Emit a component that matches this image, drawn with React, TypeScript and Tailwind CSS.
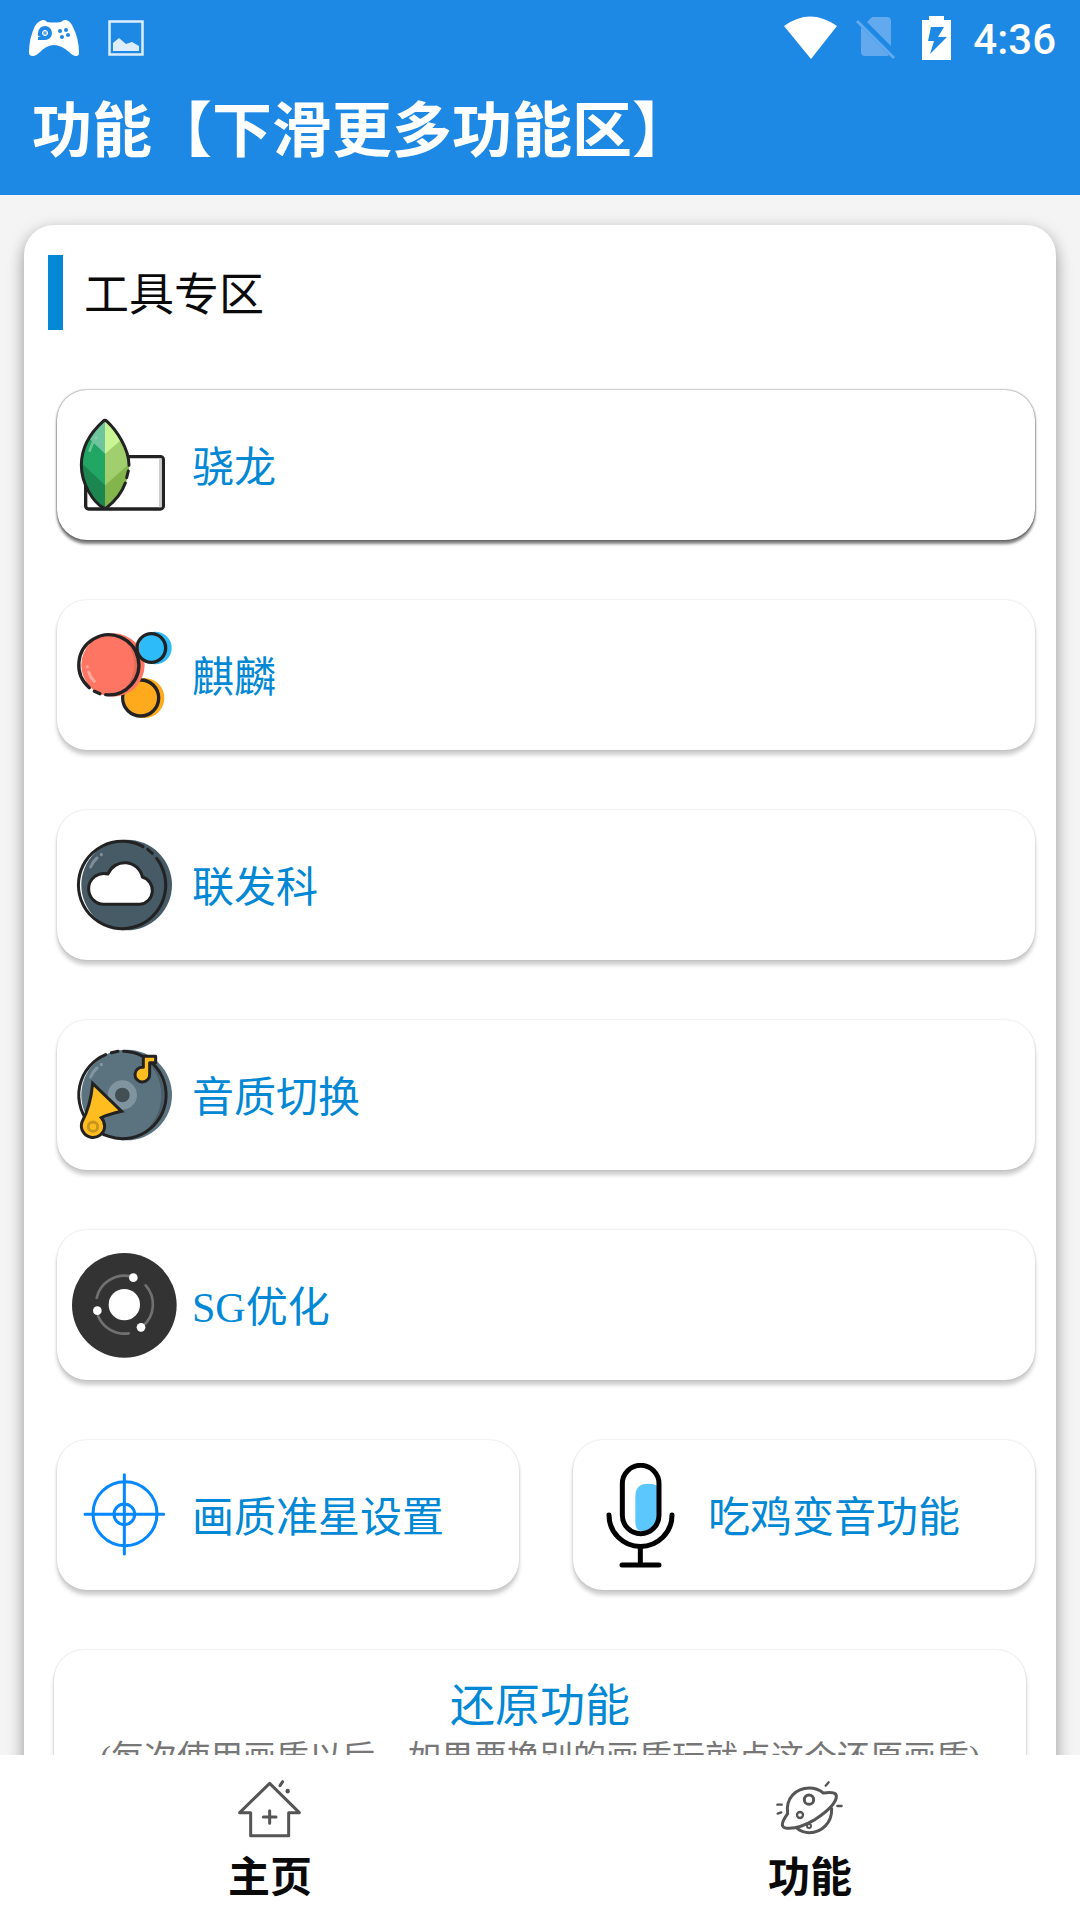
import { useState } from 'react';
import type { ReactNode } from 'react';
import clsx from 'clsx';

const INK = '#222222';

function LeafIcon() {
  return (
    <svg viewBox="216 638 315 315" className="size-[105px] shrink-0" aria-hidden="true">
      <defs>
        <clipPath id="leaf">
          <path d="M315 660C270 697 244 745 244 795C244 850 280 906 315 925C355 897 387 850 387 795C387 745 350 690 315 660Z" />
        </clipPath>
      </defs>
      <rect x="257" y="769" width="233" height="157" rx="9" fill="#fff" stroke={INK} strokeWidth="10" />
      <path d="M481 774V921" stroke="#cfcfcf" strokeWidth="8" />
      <g clipPath="url(#leaf)">
        <path d="M240 650H315V930H240Z" fill="#21a663" />
        <path d="M315 650H395V930H315Z" fill="#a2cf6e" />
        <path d="M240 650H315V760L240 688Z" fill="#6fc59d" />
        <path d="M315 650H395V692L315 760Z" fill="#c9f594" />
        <path d="M240 784L315 855V930H240Z" fill="#1b8650" />
        <path d="M395 784L315 855V930H395Z" fill="#82b54b" />
        <path d="M269 751L278 728M288 712V713" stroke="#9bd8bb" strokeWidth="8" strokeLinecap="round" opacity=".6" />
      </g>
      <path
        d="M387 795C387 745 350 690 321 663Q315 657 309 663C268 700 244 745 244 795C244 850 280 906 309 922Q315 926 321 921C345 902 366 876 376 848M380 832L385 812"
        fill="none"
        stroke={INK}
        strokeWidth="9"
        strokeLinecap="round"
      />
    </svg>
  );
}

function BubblesIcon() {
  return (
    <svg viewBox="96 129 315 315" className="size-[105px] shrink-0" aria-hidden="true" fill="none">
      <circle cx="313" cy="354" r="60" fill="#ffa91c" />
      <path d="M335 308A54 54 0 0 1 330 400A64 64 0 0 0 335 308Z" fill="#e5961b" />
      <circle cx="302" cy="354" r="54" stroke={INK} strokeWidth="10" />
      <circle cx="219" cy="255" r="95" fill="#fe7564" />
      <path d="M258 184A92 92 0 0 1 240 338A106 106 0 0 0 258 184Z" fill="#e5695b" />
      <path
        d="M148 323A90 90 0 1 1 197 344M163 334L180 341"
        stroke={INK}
        strokeWidth="10"
        strokeLinecap="round"
      />
      <path d="M146 276Q151 293 163 304M142 260V261" stroke="#ffa99d" strokeWidth="9" strokeLinecap="round" />
      <circle cx="346" cy="204" r="49" fill="#2dbbf9" />
      <path d="M360 170A44 44 0 0 1 355 244A56 56 0 0 0 360 170Z" fill="#279fd4" />
      <circle cx="334" cy="204" r="43" stroke={INK} strokeWidth="10" />
    </svg>
  );
}

function CloudIcon() {
  return (
    <svg viewBox="96 99 315 315" className="size-[105px] shrink-0" aria-hidden="true" fill="none">
      <circle cx="260" cy="255" r="136" fill="#465b66" />
      <path d="M313 143A131 131 0 0 1 312 368A136 136 0 0 0 313 143Z" fill="#3b4c55" />
      <path
        d="M309 140A131 131 0 1 0 350 175M323 148L337 160"
        stroke={INK}
        strokeWidth="9"
        strokeLinecap="round"
      />
      <path
        d="M192 313A46 46 0 0 1 146 267A46 46 0 0 1 204 222A54 54 0 0 1 307 231A42 42 0 0 1 300 313Z"
        fill="#fff"
        stroke={INK}
        strokeWidth="9"
        strokeLinejoin="round"
      />
      <path d="M152 201Q159 184 171 174M184 163V164" stroke="#7f8e96" strokeWidth="9" strokeLinecap="round" />
    </svg>
  );
}

function DiscIcon() {
  return (
    <svg viewBox="96 99 315 315" className="size-[105px] shrink-0" aria-hidden="true" fill="none">
      <circle cx="260" cy="255" r="136" fill="#5b727f" />
      <path d="M318 150A131 131 0 0 1 302 373A143 143 0 0 0 318 150Z" fill="#4b5e69" />
      <path
        d="M197 134A131 131 0 1 0 251 124M214 128L234 124"
        stroke={INK}
        strokeWidth="9"
        strokeLinecap="round"
      />
      <circle cx="247" cy="255" r="33" fill="#425056" stroke="#80949f" strokeWidth="22" />
      <path d="M152 201Q159 184 171 174M184 163V164" stroke="#8397a1" strokeWidth="9" strokeLinecap="round" />
      <path
        d="M158 220L245 304Q205 313 184 323Q194 334 194 350A35 35 0 1 1 126 336Q152 288 158 220Z"
        fill="#ffbd20"
        stroke={INK}
        strokeWidth="9"
      />
      <circle cx="159" cy="350" r="14" stroke="#c8951f" strokeWidth="9" />
      <path
        d="M310 139H347V158H329V193A22 22 0 1 1 310 172Z"
        fill="#ffbd20"
        stroke={INK}
        strokeWidth="9"
        strokeLinejoin="round"
      />
    </svg>
  );
}

function OrbitIcon() {
  return (
    <svg viewBox="96 98 315 315" className="size-[105px] shrink-0" aria-hidden="true" fill="none">
      <circle cx="253" cy="255" r="157" fill="#333333" />
      <path
        d="M170 233A86 86 0 0 1 272 168M317 195A86 86 0 0 1 308 318M174 286A86 86 0 0 0 266 339"
        stroke="#717171"
        strokeWidth="8"
        strokeLinecap="round"
      />
      <g fill="#fff">
        <circle cx="253" cy="253" r="47" />
        <circle cx="280" cy="172" r="13" />
        <circle cx="172" cy="271" r="13" />
        <circle cx="303" cy="321" r="13" />
      </g>
    </svg>
  );
}

function CrosshairIcon() {
  return (
    <svg viewBox="96 99 315 315" className="size-[105px] shrink-0" aria-hidden="true" fill="none">
      <g stroke="#0487ff" strokeWidth="9" strokeLinecap="round">
        <circle cx="255" cy="251" r="96" />
        <circle cx="253" cy="253" r="31" />
        <path d="M253 134V372M135 253H371" />
      </g>
    </svg>
  );
}

function MicIcon() {
  return (
    <svg viewBox="84 97 315 315" className="size-[105px] shrink-0" aria-hidden="true" fill="none">
      <path d="M226 197Q226 159 264 159Q285 159 297 168V254Q290 301 243 301Q226 301 226 270Z" fill="#5cc7fd" />
      <g stroke="#000" strokeWidth="15" strokeLinecap="round">
        <rect x="187" y="104" width="110" height="205" rx="55" />
        <path d="M147 253A94 94 0 0 0 336 253M241 348V403M186 403H297" />
      </g>
    </svg>
  );
}

function HomeIcon() {
  return (
    <svg viewBox="102 39 216 216" className="size-[72px]" aria-hidden="true" fill="none">
      <g stroke="#555555" strokeWidth="9" strokeLinejoin="round" strokeLinecap="round">
        <path d="M209 70L119 158H152V227H266V158H298Z" />
        <path d="M209 152V190M190 171H228" />
        <path d="M240 77L248 65" />
        <path d="M263 93V94" strokeWidth="13" />
      </g>
    </svg>
  );
}

function PlanetIcon() {
  return (
    <svg viewBox="102 39 216 216" className="size-[72px]" aria-hidden="true" fill="none">
      <g stroke="#555555" strokeWidth="9" strokeLinejoin="round" strokeLinecap="round">
        <path d="M143 161C136 115 168 84 208 84Q232 84 250 99C276 95 291 98 289 111C287 130 262 154 226 178C192 198 158 207 137 204C118 200 130 179 143 161Z" />
        <path d="M275 146C276 190 244 218 208 218Q188 218 172 206" />
        <circle cx="207" cy="119" r="14" />
        <circle cx="180" cy="165" r="9" strokeWidth="7" />
        <circle cx="207" cy="198" r="6" strokeWidth="6" />
        <path d="M257 77L266 67M292 138H305M112 134H125M113 161L124 157" strokeWidth="7" />
      </g>
    </svg>
  );
}

function StatusBar() {
  return (
    <div className="flex h-[72px] items-center justify-between pt-[3px] pr-6 pl-[29px] text-white">
      <div className="flex items-center gap-[29px]">
        <svg viewBox="0 0 50 36" className="h-9 w-[50px]" aria-hidden="true">
          <path
            d="M14 0Q17 0 18 2Q25 3 32 2Q34 0 36 0Q40 0 43 5Q50 18 50 33Q50 36 47 36Q44 36 40 32Q32 25 25 25Q18 25 11 32Q7 36 4 36Q0 36 0 33Q0 18 6 6Q9 1 14 0Z"
            fill="#fff"
          />
          <g fill="#1e88e5">
            <path d="M9 16V13A7 7 0 1 1 16 20H14V16H12V13A4 4 0 1 1 16 17H14V20H9V17H12Z" />
            <circle cx="31" cy="11" r="2" />
            <circle cx="37" cy="10" r="2" />
            <circle cx="33" cy="17" r="2" />
            <circle cx="39" cy="15" r="2" />
          </g>
          <path d="M16 10V16M13 13H19" stroke="#fff" strokeWidth="3" />
          <path d="M16 11V15M14 13H18" stroke="#1e88e5" />
        </svg>
        <svg viewBox="0 0 36 36" className="size-9 opacity-85" aria-hidden="true">
          <rect x="1.5" y="1.5" width="33" height="33" fill="none" stroke="#fff" strokeWidth="2.5" />
          <path d="M5 31V23L11 18L18 24L24 22L31 26V31Z" fill="#fff" />
        </svg>
      </div>
      <div className="flex items-center">
        <svg viewBox="0 0 54 44" className="mr-[18px] h-11 w-[54px]" aria-hidden="true">
          <path d="M0 10Q26 -9 53 10L27 43Z" fill="#fff" />
        </svg>
        <svg viewBox="0 0 40 44" className="mr-[26px] h-11 w-10" aria-hidden="true">
          <path d="M16 1H31Q35 1 35 5V30L11 6ZM5 11L33 39Q32 40 31 40H9Q5 40 5 36Z" fill="#62aaed" />
          <path d="M1 5L38 42" stroke="#62aaed" strokeWidth="3" />
        </svg>
        <svg viewBox="0 0 29 44" className="mr-[22px] h-11 w-[29px]" aria-hidden="true">
          <path d="M7 0H22V4H29V44H0V4H7Z" fill="#fff" />
          <path d="M9 11H22L16 21H25L8 38L12 25H6Z" fill="#1e88e5" />
        </svg>
        <time className="pt-1 font-['Roboto',sans-serif] text-[42px] leading-none font-medium">4:36</time>
      </div>
    </div>
  );
}

type ToolButtonProps = {
  icon: ReactNode;
  label: string;
  raised?: boolean;
};

function ToolButton({ icon, label, raised }: ToolButtonProps) {
  return (
    <button
      type="button"
      className={clsx(
        'flex h-[150px] w-full items-center gap-[15px] rounded-[30px] bg-white px-[15px] text-[42px] leading-[60px] text-[#0288d4]',
        raised
          ? 'shadow-[0_0_2px_rgba(0,0,0,0.7),0_4px_3px_rgba(0,0,0,0.5)]'
          : 'shadow-[0_0_2px_rgba(0,0,0,0.18),0_5px_4px_rgba(0,0,0,0.2)]',
      )}
    >
      {icon}
      <span className="pt-1.5">{label}</span>
    </button>
  );
}

const tools = [
  { label: '骁龙', icon: <LeafIcon />, raised: true },
  { label: '麒麟', icon: <BubblesIcon /> },
  { label: '联发科', icon: <CloudIcon /> },
  { label: '音质切换', icon: <DiscIcon /> },
  { label: 'SG优化', icon: <OrbitIcon /> },
];

const tabs = [
  { id: 'home', label: '主页', icon: <HomeIcon /> },
  { id: 'features', label: '功能', icon: <PlanetIcon /> },
];

export default function App() {
  const [tab, setTab] = useState('features');

  return (
    <div className="flex h-screen flex-col bg-[#f4f4f4] font-['Liberation_Serif','Noto_Sans_CJK_SC',sans-serif]">
      <header className="shrink-0 bg-[#1e88e5]">
        <StatusBar />
        <h1 className="px-8 pt-[15px] pb-[18px] text-[60px] leading-[90px] font-bold text-white">
          功能【下滑更多功能区】
        </h1>
      </header>

      <main className="min-h-0 flex-1 overflow-y-auto px-6 py-[30px] [scrollbar-width:none]">
        <section className="rounded-[30px] bg-white pt-[30px] pb-[60px] shadow-[0_6px_16px_rgba(0,0,0,0.4)]">
          <h2 className="mx-6 flex items-center gap-[21px] text-[45px] leading-[60px] text-[#0a0a0a]">
            <span className="h-[75px] w-[15px] bg-[#0288d4]" />
            <span className="pt-1.5">工具专区</span>
          </h2>

          <div className="mt-[60px] mr-[21px] ml-[33px] flex flex-col gap-[60px]">
            {tools.map((t) => (
              <ToolButton key={t.label} {...t} />
            ))}
            <div className="grid grid-cols-2 gap-[54px]">
              <ToolButton icon={<CrosshairIcon />} label="画质准星设置" />
              <ToolButton icon={<MicIcon />} label="吃鸡变音功能" />
            </div>
          </div>

          <button
            type="button"
            className="mx-[30px] mt-[60px] flex w-[calc(100%-60px)] flex-col items-center rounded-[30px] bg-white px-[15px] pt-[27px] pb-[30px] shadow-[0_0_2px_rgba(0,0,0,0.18),0_5px_4px_rgba(0,0,0,0.2)]"
          >
            <span className="text-[45px] leading-[60px] text-[#0288d4]">还原功能</span>
            <span className="text-[33px] leading-[42px] whitespace-nowrap text-[#777777]">
              (每次使用画质以后，如果要换别的画质玩就点这个还原画质)
            </span>
          </button>
        </section>
      </main>

      <nav className="grid shrink-0 grid-cols-2 bg-white">
        {tabs.map((t) => (
          <button
            key={t.id}
            type="button"
            aria-current={tab === t.id ? 'page' : undefined}
            onClick={() => setTab(t.id)}
            className="flex flex-col items-center pt-[18px] pb-3 text-[42px] leading-[60px] font-bold text-[#0a0a0a]"
          >
            {t.icon}
            <span className="pt-[3px]">{t.label}</span>
          </button>
        ))}
      </nav>
    </div>
  );
}
